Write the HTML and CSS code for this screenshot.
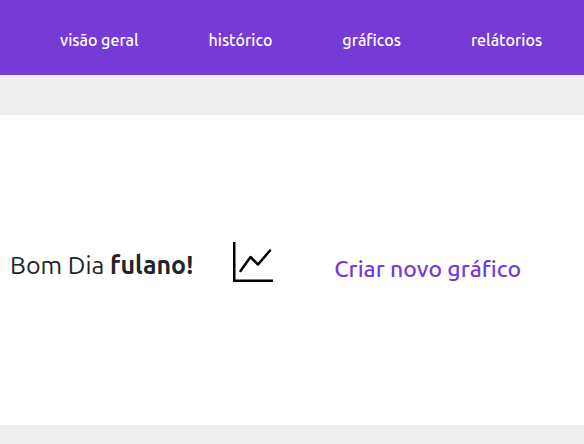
FILE: index.html
```html
<!DOCTYPE html>
<html lang="pt-BR">
<head>
<meta charset="utf-8">
<title>Visão geral</title>
<link rel="stylesheet" href="styles.css">
</head>
<body>
<header class="topbar">
  <nav class="menu">
    <a href="#">visão geral</a>
    <a href="#">histórico</a>
    <a href="#">gráficos</a>
    <a href="#">relátorios</a>
  </nav>
</header>
<main class="panel">
  <div class="intro">
    <h1 class="greeting">Bom Dia <strong>fulano!</strong></h1>
    <svg class="chart" viewBox="0 0 40 40" aria-hidden="true">
      <path d="M1.25 0V38.75H40" fill="none" stroke="#000" stroke-width="2.5"/>
      <path d="M7.5 29L17.5 15L25 22.500L37 8.500" fill="none" stroke="#000" stroke-width="2.5" stroke-linecap="round" stroke-linejoin="round"/>
    </svg>
  </div>
  <a class="create" href="#">Criar novo gráfico</a>
</main>
</body>
</html>
```
FILE: styles.css
```css
* {
  box-sizing: border-box;
}

body {
  margin: 0;
  min-height: 100vh;
  background: #eee;
  color: #212529;
  font-family: Ubuntu, "Noto Sans", "Open Sans", sans-serif;
}

a {
  text-decoration: none;
}

.topbar {
  padding: 28px 40px 23px 60px;
  background: #763bd6;
}

.menu {
  display: flex;
  gap: 70px;
}

.menu a {
  color: #fff;
  font-size: 16px;
  font-weight: 500;
  line-height: 24px;
  white-space: nowrap;
}

.panel {
  display: flex;
  align-items: center;
  margin-top: 40px;
  padding: 127px 10px;
  background: #fff;
}

.intro {
  display: flex;
  gap: 40px;
  padding-bottom: 10px;
}

.greeting {
  margin: 0;
  font-size: 25px;
  font-weight: 400;
  line-height: 46px;
}

.greeting strong {
  font-weight: 700;
}

.chart {
  width: 40px;
  height: 40px;
}

.create {
  margin: 0 0 4px 61px;
  color: #763bd6;
  font-size: 23px;
  font-weight: 500;
}
```
